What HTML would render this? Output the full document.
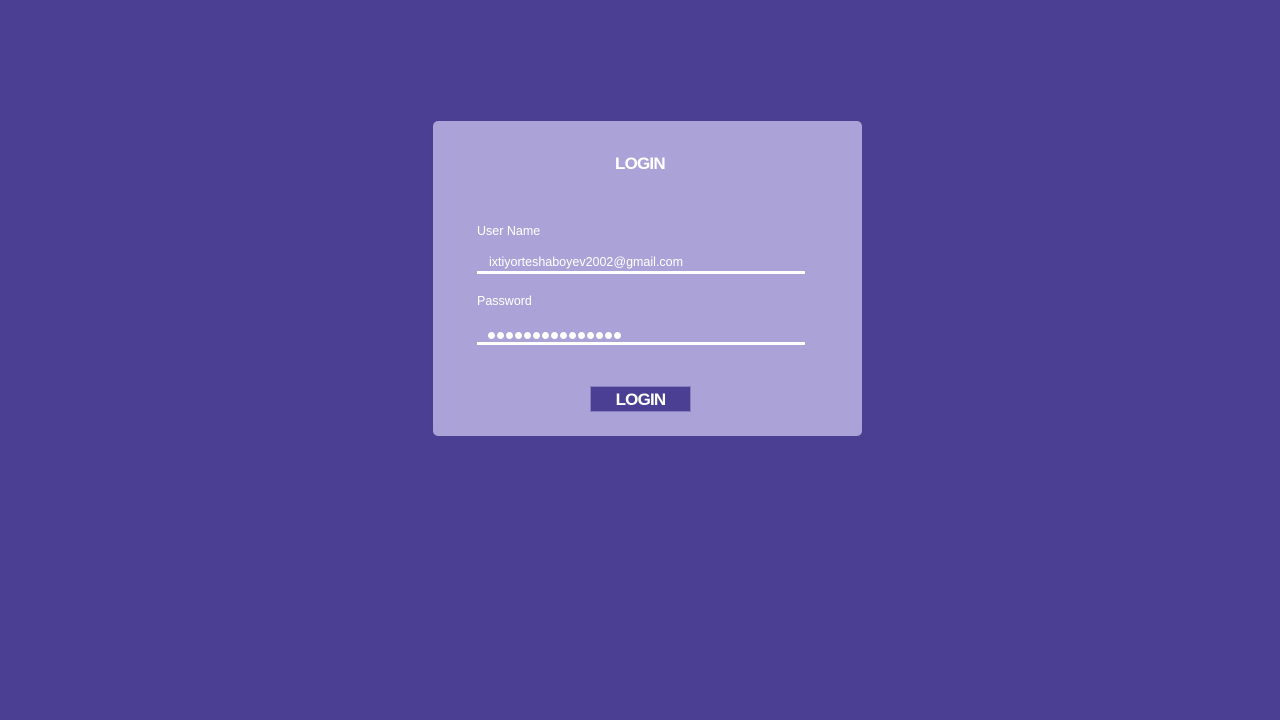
<!DOCTYPE html>
<html><head><style>
body{margin:0;width:1280px;height:720px;background:#4b3f94;font-family:"Liberation Sans",sans-serif;position:relative;overflow:hidden}
.card{position:absolute;left:433px;top:121px;width:429px;height:315px;background:#aba2d7;border-radius:5px}
.t{position:absolute;color:#fff;white-space:nowrap}
.line{position:absolute;left:44px;width:328px;height:3px;background:#fff}
.btn{position:absolute;left:157px;top:265px;width:99px;height:24px;background:#4b3f94;border:1px solid #8a80c0;color:#fff;font-size:17px;font-weight:bold;text-align:center;line-height:25px;letter-spacing:-0.8px}
.dots{position:absolute;left:55px;top:211px;display:flex;gap:2px}
.dots i{width:7px;height:7px;border-radius:50%;background:#fff;display:block}
</style></head><body>
<div class="card">
<div class="t" style="left:182px;top:33px;font-size:17px;font-weight:bold;letter-spacing:-0.8px">LOGIN</div>
<div class="t" style="left:44px;top:103px;font-size:12.5px">User Name</div>
<div class="t" style="left:56px;top:134px;font-size:12.5px">ixtiyorteshaboyev2002@gmail.com</div>
<div class="line" style="top:150px"></div>
<div class="t" style="left:44px;top:173px;font-size:12.5px">Password</div>
<div class="dots"><i></i><i></i><i></i><i></i><i></i><i></i><i></i><i></i><i></i><i></i><i></i><i></i><i></i><i></i><i></i></div>
<div class="line" style="top:221px"></div>
<div class="btn">LOGIN</div>
</div>
</body></html>
